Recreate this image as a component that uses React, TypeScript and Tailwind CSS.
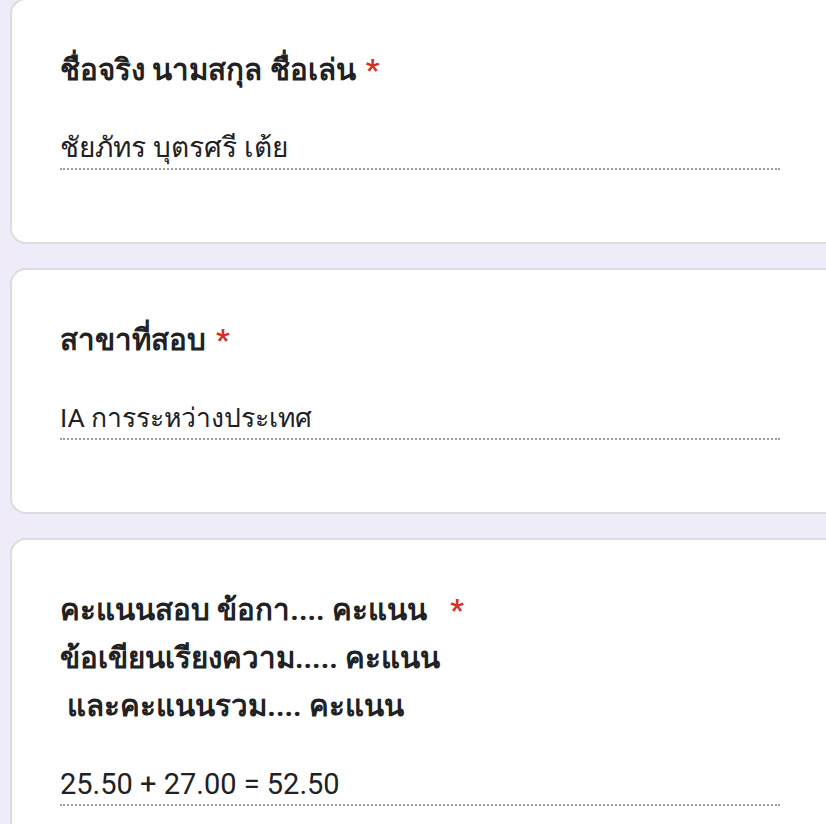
import React from 'react';

interface QuestionCardProps {
    title: string;
    answer: string;
    answerClass?: string;
}

// การ์ดคำถามแบบ Google Forms (ขยาย 2 เท่า)
const QuestionCard = ({ title, answer, answerClass = 'text-[28px] font-normal' }: QuestionCardProps) => {
    return (
        <div className="w-[1000px] shrink-0 rounded-[16px] border-2 border-[#dadce0] bg-white pt-[46px] pb-[46px] pl-[48px]">
            {/* หัวข้อคำถาม + เครื่องหมายบังคับ */}
            <div className="flex items-start">
                <div className="whitespace-pre-wrap text-[29.5px] font-bold leading-[48px] text-[#202124]">
                    {title}
                </div>
                <span className="ml-[10px] text-[30px] font-bold leading-[48px] text-[#d93025]">*</span>
            </div>

            {/* คำตอบ */}
            <div className="mt-[34px] mb-[26px] w-[720px] border-b-2 border-dotted border-[#9e9e9e]">
                <div className={`leading-[40px] text-[#202124] ${answerClass}`}>{answer}</div>
            </div>
        </div>
    );
};

export default function App() {
    return (
        <div
            className="h-[824px] w-full overflow-hidden bg-[#f0ebf8]"
            style={{ fontFamily: 'Roboto, "Noto Sans", "DejaVu Sans", sans-serif' }}
        >
            <div className="-mt-[2px] ml-[10px] flex flex-col gap-[24px]">
                <QuestionCard
                    title="ชื่อจริง นามสกุล ชื่อเล่น"
                    answer="ชัยภัทร บุตรศรี เต้ย"
                    answerClass="text-[28px] font-medium"
                />
                <QuestionCard
                    title="สาขาที่สอบ"
                    answer="IA การระหว่างประเทศ"
                    answerClass="text-[26.5px] font-normal"
                />
                <QuestionCard
                    title={'คะแนนสอบ ข้อกา.... คะแนน\nข้อเขียนเรียงความ..... คะแนน\n และคะแนนรวม.... คะแนน'}
                    answer="25.50 + 27.00 = 52.50"
                    answerClass="text-[29px] font-normal"
                />
            </div>
        </div>
    );
}
